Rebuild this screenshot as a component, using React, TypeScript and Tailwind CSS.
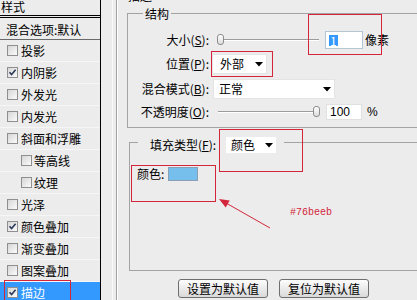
import React from "react";

function Check({ checked }: { checked?: boolean }) {
  return (
    <div className="w-[11px] h-[11px] shrink-0 border border-[#8f8f8f] bg-linear-to-br from-[#d6d6d6] to-[#fbfbfb] flex items-center justify-center">
      {checked && (
        <svg width="9" height="9" viewBox="0 0 9 9">
          <path d="M1.5 4.2 L3.6 6.6 L7.6 1.8" fill="none" stroke="#2c3a5a" strokeWidth="1.6" />
        </svg>
      )}
    </div>
  );
}

function Tri() {
  return (
    <svg width="8" height="5" viewBox="0 0 8 5" className="shrink-0">
      <polygon points="0,0 8,0 4,4.5" fill="#000" />
    </svg>
  );
}

function Slider({ right }: { right?: boolean }) {
  return (
    <div className="relative w-[102px] h-[20px]">
      <div className="absolute left-0 right-0 top-[9px] h-[2px] border-t border-[#9c9c9c] border-b border-b-white" />
      <div
        className={
          right
            ? "absolute right-0 top-[4px] w-[7px] h-[11px] rounded-[3px] border border-[#8c8c8c] bg-linear-to-b from-white to-[#dcdcdc]"
            : "absolute left-0 top-[4px] w-[7px] h-[11px] rounded-[3px] border border-[#8c8c8c] bg-linear-to-b from-white to-[#dcdcdc]"
        }
      />
    </div>
  );
}

const rows: { t: string; c?: boolean; i?: boolean; sel?: boolean }[] = [
  { t: "投影" },
  { t: "内阴影", c: true },
  { t: "外发光" },
  { t: "内发光" },
  { t: "斜面和浮雕" },
  { t: "等高线", i: true },
  { t: "纹理", i: true },
  { t: "光泽" },
  { t: "颜色叠加", c: true },
  { t: "渐变叠加" },
  { t: "图案叠加" },
  { t: "描边", c: true, sel: true },
];

export default function App() {
  return (
    <div className="relative w-[417px] h-[300px] overflow-hidden bg-[#ececec] flex text-[12px] leading-[14px] text-black font-['Noto_Sans_CJK_SC','Noto_Sans',sans-serif]">
      {/* left style list */}
      <div className="w-[101px] shrink-0 border-r border-black flex flex-col">
        <div className="h-[15px] shrink-0 text-[12px] leading-[14px] pl-[1px]">样式</div>
        <div className="h-[3px] shrink-0 border-y border-black" />
        <div className="h-[22px] shrink-0 border-b border-[#6a6a6a] pl-[6px] pt-[3px] flex items-center">
          混合选项:默认
        </div>
        {rows.map((r) => (
          <div
            key={r.t}
            className={
              (r.sel ? "bg-[#3399ff] text-white " : "") +
              (r.i ? "pl-[21px] gap-[2px] " : "pl-[7px] gap-[3px] ") +
              "h-[22px] shrink-0 border-b border-[#f6f6f6] flex items-center"
            }
          >
            <Check checked={r.c} />
            <span>{r.t}</span>
          </div>
        ))}
      </div>

      <div className="w-[12px] shrink-0 border-r border-[#fafafa]" />

      {/* main frame */}
      <div className="ml-[3px] flex-1 min-w-0 border-l border-[#a3a3a3] shadow-[inset_1px_0_0_#ffffff] pl-[10px] flex flex-col">
        <div className="h-[13px] shrink-0">
          <span className="block -mt-[10px] ml-[1px] leading-[12px]">描边</span>
        </div>

        {/* 结构 group */}
        <div className="w-[330px] h-[115px] shrink-0 border border-[#a3a3a3] flex flex-col">
          <div className="-mt-[7px] ml-[15px] px-[2px] w-fit bg-[#ececec] h-[14px] leading-[14px]">结构</div>

          <div className="mt-[9px] h-[20px] flex items-center">
            <div className="w-[81px] shrink-0 text-right">
              大小(<span className="underline">S</span>):
            </div>
            <div className="ml-[8px]">
              <Slider />
            </div>
            <div className="ml-[6px] w-[38px] h-[18px] bg-white border border-[#b7c5d3] flex items-center pl-[3px]">
              <span className="bg-[#3399ff] text-white leading-[11px] px-[1px]">1</span>
            </div>
            <span className="ml-[2px]">像素</span>
          </div>

          <div className="mt-[4px] h-[20px] flex items-center">
            <div className="w-[81px] shrink-0 text-right">
              位置(<span className="underline">P</span>):
            </div>
            <div className="ml-[3px] w-[55px] h-[20px] bg-white border border-[#e4e4e4] flex items-center justify-between pl-[7px] pr-[3px]">
              <span>外部</span>
              <Tri />
            </div>
          </div>

          <div className="mt-[5px] h-[20px] flex items-center">
            <div className="w-[81px] shrink-0 text-right">
              混合模式(<span className="underline">B</span>):
            </div>
            <div className="ml-[4px] w-[122px] h-[20px] bg-white border border-[#e4e4e4] flex items-center justify-between pl-[5px] pr-[3px]">
              <span>正常</span>
              <Tri />
            </div>
          </div>

          <div className="mt-[3px] h-[20px] flex items-center">
            <div className="w-[81px] shrink-0 text-right">
              不透明度(<span className="underline">O</span>):
            </div>
            <div className="ml-[9px]">
              <Slider right />
            </div>
            <div className="ml-[6px] w-[36px] h-[16px] bg-white border border-[#e0e0e0] flex items-center pl-[3px] font-['Liberation_Sans',sans-serif]">
              100
            </div>
            <span className="ml-[5px] font-['Liberation_Sans',sans-serif]">%</span>
          </div>
        </div>

        {/* 填充类型 group */}
        <div className="mt-[14px] ml-[2px] w-[330px] h-[129px] shrink-0 border border-[#a3a3a3] flex flex-col">
          <div className="-mt-[6px] ml-[8px] pl-[12px] pr-[8px] w-fit bg-[#ececec] h-[16px] flex items-center">
            <span>
              填充类型(<span className="underline">F</span>):
            </span>
            <div className="ml-[10px] w-[50px] h-[16px] bg-white flex items-center justify-between pl-[5px] pr-[3px]">
              <span>颜色</span>
              <Tri />
            </div>
          </div>
          <div className="mt-[14px] pl-[7px] h-[14px] flex items-center">
            <span>颜色:</span>
            <div className="ml-[4px] w-[30px] h-[14px] bg-[#76beeb] border border-[#8a9fb3]" />
          </div>
        </div>

        {/* buttons */}
        <div className="mt-[8px] pl-[51px] flex gap-[11px]">
          <div className="w-[90px] h-[19px] shrink-0 border border-[#6e6e6e] rounded-[3px] bg-linear-to-b from-[#fdfdfd] to-[#d9d9d9] flex items-center justify-center">
            设置为默认值
          </div>
          <div className="w-[90px] h-[19px] shrink-0 border border-[#6e6e6e] rounded-[3px] bg-linear-to-b from-[#fdfdfd] to-[#d9d9d9] flex items-center justify-center">
            复位为默认值
          </div>
        </div>
      </div>

      {/* red annotations */}
      <div className="absolute left-[4px] top-[280px] w-[67px] h-[21px] border border-[#d3263a]" />
      <div className="absolute left-[308px] top-[14px] w-[74px] h-[41px] border border-[#d3263a]" />
      <div className="absolute left-[211px] top-[51px] w-[62px] h-[26px] border border-[#d3263a]" />
      <div className="absolute left-[219px] top-[129px] w-[84px] h-[43px] border border-[#d3263a]" />
      <div className="absolute left-[131px] top-[165px] w-[85px] h-[37px] border border-[#d3263a]" />
      <div className="absolute left-[290px] top-[207px] text-[10px] leading-[12px] text-[#d3263a] font-['Liberation_Mono',monospace]">
        #76beeb
      </div>
      <svg className="absolute left-0 top-0 pointer-events-none" width="417" height="300" viewBox="0 0 417 300">
        <line x1="270" y1="228" x2="226" y2="203" stroke="#d3263a" strokeWidth="1" />
        <polygon points="219,199 225.7,207.4 229.7,200.4" fill="#d3263a" />
      </svg>
    </div>
  );
}
